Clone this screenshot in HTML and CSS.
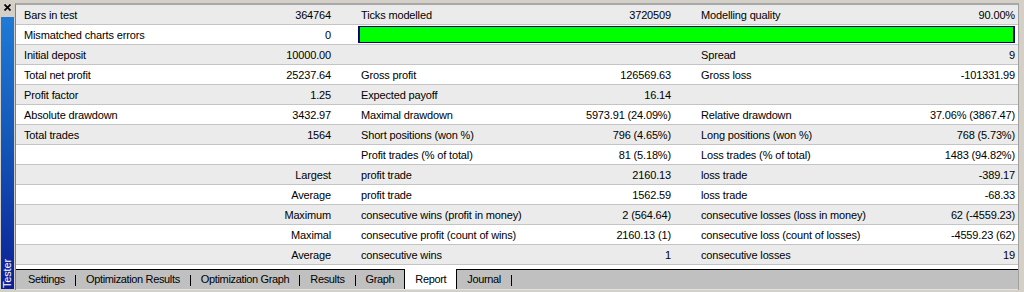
FILE: index.html
```html
<!DOCTYPE html>
<html lang="en">
<head>
  <meta charset="UTF-8" />
  <title>Tester - Report</title>
  <link rel="stylesheet" href="styles.css">
</head>
<body>
  <div class="window">
    <div class="sidebar">
      <div class="close">
        <svg width="7" height="7" viewBox="0 0 7 7"><path d="M0.5 0.5 L6.5 6.5 M6.5 0.5 L0.5 6.5" stroke="#000" stroke-width="1.7" fill="none"/></svg>
      </div>
      <div class="caption"><span>Tester</span></div>
    </div>

    <div class="panel">
      <div class="report">
        <div class="row">
          <div class="label">Bars in test</div><div class="value">364764</div>
          <div class="label">Ticks modelled</div><div class="value">3720509</div>
          <div class="label">Modelling quality</div><div class="value">90.00%</div>
        </div>
        <div class="row">
          <div class="label">Mismatched charts errors</div><div class="value">0</div>
          <div class="quality"></div>
        </div>
        <div class="row">
          <div class="label">Initial deposit</div><div class="value">10000.00</div>
          <div class="label"></div><div class="value"></div>
          <div class="label">Spread</div><div class="value">9</div>
        </div>
        <div class="row">
          <div class="label">Total net profit</div><div class="value">25237.64</div>
          <div class="label">Gross profit</div><div class="value">126569.63</div>
          <div class="label">Gross loss</div><div class="value">-101331.99</div>
        </div>
        <div class="row">
          <div class="label">Profit factor</div><div class="value">1.25</div>
          <div class="label">Expected payoff</div><div class="value">16.14</div>
          <div class="label"></div><div class="value"></div>
        </div>
        <div class="row">
          <div class="label">Absolute drawdown</div><div class="value">3432.97</div>
          <div class="label">Maximal drawdown</div><div class="value">5973.91 (24.09%)</div>
          <div class="label">Relative drawdown</div><div class="value">37.06% (3867.47)</div>
        </div>
        <div class="row">
          <div class="label">Total trades</div><div class="value">1564</div>
          <div class="label">Short positions (won %)</div><div class="value">796 (4.65%)</div>
          <div class="label">Long positions (won %)</div><div class="value">768 (5.73%)</div>
        </div>
        <div class="row">
          <div class="label"></div><div class="value"></div>
          <div class="label">Profit trades (% of total)</div><div class="value">81 (5.18%)</div>
          <div class="label">Loss trades (% of total)</div><div class="value">1483 (94.82%)</div>
        </div>
        <div class="row">
          <div class="label"></div><div class="value">Largest</div>
          <div class="label">profit trade</div><div class="value">2160.13</div>
          <div class="label">loss trade</div><div class="value">-389.17</div>
        </div>
        <div class="row">
          <div class="label"></div><div class="value">Average</div>
          <div class="label">profit trade</div><div class="value">1562.59</div>
          <div class="label">loss trade</div><div class="value">-68.33</div>
        </div>
        <div class="row">
          <div class="label"></div><div class="value">Maximum</div>
          <div class="label">consecutive wins (profit in money)</div><div class="value">2 (564.64)</div>
          <div class="label">consecutive losses (loss in money)</div><div class="value">62 (-4559.23)</div>
        </div>
        <div class="row">
          <div class="label"></div><div class="value">Maximal</div>
          <div class="label">consecutive profit (count of wins)</div><div class="value">2160.13 (1)</div>
          <div class="label">consecutive loss (count of losses)</div><div class="value">-4559.23 (62)</div>
        </div>
        <div class="row">
          <div class="label"></div><div class="value">Average</div>
          <div class="label">consecutive wins</div><div class="value">1</div>
          <div class="label">consecutive losses</div><div class="value">19</div>
        </div>
      </div>

      <div class="tabs">
        <div class="tab">Settings</div><span class="sep"></span>
        <div class="tab">Optimization Results</div><span class="sep"></span>
        <div class="tab">Optimization Graph</div><span class="sep"></span>
        <div class="tab">Results</div><span class="sep"></span>
        <div class="tab">Graph</div>
        <div class="tab active">Report</div>
        <div class="tab">Journal</div><span class="sep"></span>
      </div>
    </div>
  </div>
</body>
</html>
```

FILE: styles.css
```css
html, body {
  margin: 0;
  padding: 0;
}

body {
  background: #d4d0c8;
  font-family: "Liberation Sans", Arial, sans-serif;
  font-size: 11px;
  letter-spacing: -0.15px;
  color: #000;
  width: 1024px;
  height: 292px;
  overflow: hidden;
}

.window {
  display: flex;
  height: 292px;
}

/* left docked caption */
.sidebar {
  width: 14px;
  display: flex;
  flex-direction: column;
  padding-left: 1px;
  box-sizing: border-box;
}

.close {
  height: 17px;
  padding: 4px 0 0 3px;
  box-sizing: border-box;
}

.close svg {
  display: block;
}

.caption {
  flex: 1;
  margin-bottom: 3px;
  background: linear-gradient(to bottom, #1f7ad6 0%, #1457b8 45%, #0b1f96 100%);
  display: flex;
  flex-direction: column;
  justify-content: flex-end;
  align-items: center;
}

.caption span {
  writing-mode: vertical-rl;
  transform: rotate(180deg);
  color: #fff;
  font-size: 11px;
  line-height: 13px;
  padding-top: 1px;
}

/* main panel */
.panel {
  margin: 3px 5px 2px 1px;
  width: 1004px;
  border-left: 1px solid #808080;
  border-right: 1px solid #a0a0a0;
  border-top: 2px solid #a8a8a8;
  display: flex;
  flex-direction: column;
}

.report {
  background: #fff;
  padding-bottom: 4px;
}

.row {
  display: grid;
  grid-template-columns: 170px 153px 191px 149px 181px 158px;
  height: 20px;
  line-height: 19px;
  border-bottom: 1px solid #c4c4c4;
  box-sizing: border-box;
}

.row:nth-child(odd) {
  background: #ebebeb;
}

.row:nth-child(even) {
  background: #fff;
}

.label, .value {
  white-space: nowrap;
  padding-top: 1px;
}

.label {
  padding-left: 22px;
}

.row .label:first-child {
  padding-left: 8px;
}

.value {
  text-align: right;
  padding-right: 8px;
}

.row .value:last-child {
  padding-right: 3px;
}

.quality {
  grid-column: 3 / span 4;
  margin: 1px 3px 1px 19px;
  height: 17px;
  box-sizing: border-box;
  background: #00ff00;
  border: 1px solid #000080;
  border-left-width: 2px;
  border-right-width: 2px;
}

/* bottom tabs */
.tabs {
  display: flex;
  align-items: center;
  height: 21px;
  box-sizing: border-box;
  border-top: 1px solid #000;
  border-bottom: 1px solid #e4e4e4;
  background: #c0c0c0;
  padding-left: 2px;
  letter-spacing: -0.35px;
}

.tab {
  padding: 0 10px;
  line-height: 19px;
  height: 19px;
}

.tab.active {
  background: #fff;
  border-left: 1px solid #000;
  border-right: 1px solid #000;
  margin-top: -1px;
  height: 20px;
  line-height: 21px;
}

.sep {
  width: 1px;
  height: 11px;
  background: #000;
  margin-top: 1px;
}
```
